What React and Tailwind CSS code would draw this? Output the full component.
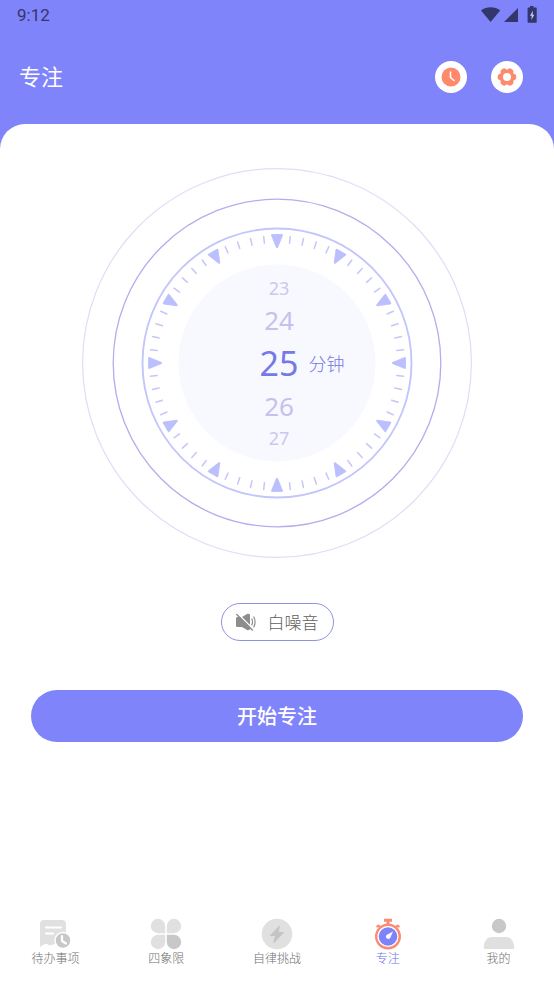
import { useState } from "react";

const tabs = [
    { id: "todo", label: "待办事项", Icon: TodoIcon },
    { id: "quadrant", label: "四象限", Icon: QuadrantIcon },
    { id: "challenge", label: "自律挑战", Icon: ChallengeIcon },
    { id: "focus", label: "专注", Icon: StopwatchIcon },
    { id: "mine", label: "我的", Icon: PersonIcon },
];

// rows of the minute wheel, from top to bottom
const wheelRows = [
    { offset: -2, className: "h-[26px] text-[18px] text-[#ccc7ee]" },
    { offset: -1, className: "h-[38px] text-[26px] text-[#c6c1ec]" },
    { offset: 0, className: "h-[48px] text-[34px] text-[#7479e8]" },
    { offset: 1, className: "h-[38px] text-[26px] text-[#c6c1ec]" },
    { offset: 2, className: "h-[26px] text-[18px] text-[#ccc7ee]" },
];

function TodoIcon() {
    return (
        <svg viewBox="0 0 32 32" className="size-8" aria-hidden="true">
            <path d="M5 2h18a4 4 0 0 1 4 4v20c-2 2-5 1.500-7 .5-2-1-4-1-6 0-2 1-4 1-6-.5-2 0-4 .5-6 2.500q-1 .8-1-.5V6a4 4 0 0 1 4-4Z" fill="#e0e0e0" />
            <path d="M7 9.500h15M7 15.500h7" stroke="#fff" strokeWidth="2.200" strokeLinecap="round" />
            <circle cx="24" cy="22.500" r="8" fill="#c8c8c8" stroke="#fff" strokeWidth="1.500" />
            <path d="M23 18v5l4 2.500" fill="none" stroke="#fff" strokeWidth="2.200" strokeLinecap="round" strokeLinejoin="round" />
        </svg>
    );
}

function QuadrantIcon() {
    return (
        <svg viewBox="0 0 32 32" className="size-8" aria-hidden="true">
            <path d="M8 .8a7.200 7.200 0 0 1 7.200 7.200v7.200H8A7.200 7.200 0 0 1 8 .8Z" fill="#e0e0e0" />
            <path d="M24 .8a7.200 7.200 0 0 1 0 14.400h-7.200V8A7.200 7.200 0 0 1 24 .8Z" fill="#e0e0e0" />
            <path d="M8 16.800h7.200V24A7.200 7.200 0 1 1 8 16.800Z" fill="#e0e0e0" />
            <path d="M16.800 16.800H24a7.200 7.200 0 1 1-7.200 7.200Z" fill="#c8c8c8" />
        </svg>
    );
}

function ChallengeIcon() {
    return (
        <svg viewBox="0 0 32 32" className="size-8" aria-hidden="true">
            <circle cx="16" cy="16" r="15.300" fill="#e0e0e0" />
            <path d="M18.500 8 9.500 17.500h5L13 24.500l9.500-10h-5.500Z" fill="#c4c4c4" stroke="#c4c4c4" strokeLinejoin="round" />
        </svg>
    );
}

function StopwatchIcon() {
    return (
        <svg viewBox="0 0 32 32" className="size-8" aria-hidden="true">
            <path d="M12 2.200h8M16 2v5" stroke="#fb8c72" strokeWidth="3" />
            <path d="m4.500 9 2-1.500 2.500 3M27.500 9l-2-1.500-2.500 3" fill="none" stroke="#fb8c72" strokeWidth="2" strokeLinejoin="round" />
            <circle cx="16" cy="18.500" r="11.800" fill="#fff" stroke="#fb8c72" strokeWidth="2.400" />
            <circle cx="16" cy="18.500" r="9.300" fill="#7f83fa" />
            <path d="m21 13.500-2.700 6.200a2.300 2.300 0 1 1-3.300-3Z" fill="#fff" />
        </svg>
    );
}

function PersonIcon() {
    return (
        <svg viewBox="0 0 32 32" className="size-8" aria-hidden="true">
            <circle cx="16" cy="8" r="7.200" fill="#c8c8c8" />
            <path d="M9 19h14c5.500 0 8 5 8.300 10.500a1.500 1.500 0 0 1-1.500 1.500H2.200a1.500 1.500 0 0 1-1.500-1.500C1 24 3.500 19 9 19Z" fill="#e0e0e0" />
        </svg>
    );
}

function ClockIcon() {
    return (
        <svg viewBox="0 0 20 20" className="size-5" aria-hidden="true">
            <circle cx="10" cy="10" r="9.500" fill="#fd8a6c" />
            <path d="M9.500 5v5.500l3.500 3" fill="none" stroke="#fff" strokeWidth="1.500" strokeLinecap="round" strokeLinejoin="round" />
        </svg>
    );
}

function GearIcon() {
    return (
        <svg viewBox="0 0 20 20" className="size-5" aria-hidden="true">
            {[0, 60, 120, 180, 240, 300].map((angle) => (
                <circle key={angle} cx="16" cy="10" r="3.300" fill="#fd8a6c" transform={`rotate(${angle} 10 10)`} />
            ))}
            <circle cx="10" cy="10" r="7.600" fill="#fd8a6c" />
            <circle cx="10" cy="10" r="4" fill="#fff" />
        </svg>
    );
}

function MutedIcon() {
    return (
        <svg viewBox="0 0 20 18" className="h-[18px] w-5" aria-hidden="true">
            <path d="M1.500 4H6l5-3c.8-.5 3-.2 3 1.200v13.600c0 1.400-2.200 1.700-3 1.200L6 14H1.500C.7 14 0 13.500 0 12.500v-7C0 4.500.7 4 1.500 4Z" fill="#8d8d8d" />
            <path d="M15.800 6c1 2 1 4 0 6M17.800 4c1.700 3.300 1.700 6.700 0 10" fill="none" stroke="#8d8d8d" strokeWidth="1.200" strokeLinecap="round" />
            <path d="m1.500 .5 16 16" stroke="#fff" strokeWidth="1.600" />
            <path d="m.8 1.500 15.500 15.500" stroke="#8d8d8d" strokeWidth="1.500" strokeLinecap="round" />
        </svg>
    );
}

function StatusBar() {
    return (
        <div className="flex h-[30px] items-center justify-between px-[17px] text-[#33366c]">
            <span className="font-[Roboto,sans-serif] text-[17px] leading-5">9:12</span>
            <svg viewBox="0 0 56 18" className="h-[18px] w-14" fill="currentColor" aria-hidden="true">
                <path d="M0 4.500C5.500.2 14 .2 19.200 4.500L9.600 16Z" />
                <path d="M37 2v14H23Z" />
                <path d="M49 0h3.500v1.500H55q.7 0 .7.8V16q0 .8-.7.8h-7.600q-.8 0-.8-.8V2.300q0-.8.800-.8H49Z" />
                <path d="m52 4.500-3 5.200h1.800L50.300 14l3-5.300h-1.800Z" fill="#c9cbff" />
            </svg>
        </div>
    );
}

function DialFace() {
    const marks = Array.from({ length: 60 }, (_, i) => i);

    return (
        <svg viewBox="-195 -195 390 390" className="col-start-1 row-start-1 w-full" fill="none" aria-hidden="true">
            <circle r="194.400" stroke="#dedef7" strokeWidth="1.200" />
            <circle r="163.800" stroke="#b1aeed" strokeWidth="1.300" />
            <circle r="134.500" stroke="#c3c6fa" strokeWidth="1.900" />
            <circle r="98.500" fill="#f8f8ff" />
            {marks.map((i) =>
                i % 5 === 0 ? (
                    <path key={i} d="M-5-128.500H5q.8 0 .5.800L.6-115.500q-.6 1-1.200 0L-5.500-127.700q-.3-.8.500-.8Z" fill="#bbbffd" stroke="#bbbffd" strokeWidth=".8" transform={`rotate(${i * 6})`} />
                ) : (
                    <path key={i} d="M0-127.300V-120.500" stroke="#c6c7f8" strokeWidth="1.500" strokeLinecap="round" transform={`rotate(${i * 6})`} />
                )
            )}
        </svg>
    );
}

function MinuteWheel({ minutes, onChange }) {
    return (
        <div className="col-start-1 row-start-1 flex flex-col items-stretch pl-1">
            {wheelRows.map(({ offset, className }) => (
                <div key={offset} className="grid grid-cols-[1fr_auto_1fr] items-center">
                    <button
                        type="button"
                        onClick={() => onChange(Math.max(3, minutes + offset))}
                        className={`col-start-2 flex items-center justify-center font-['Noto_Sans',sans-serif] leading-none ${className}`}
                    >
                        {minutes + offset}
                    </button>
                    {offset === 0 && <span className="pl-[10px] text-[18px] leading-6 font-light text-[#7479e0]">分钟</span>}
                </div>
            ))}
        </div>
    );
}

const App = () => {
    const [minutes, setMinutes] = useState(25);
    const [activeTab, setActiveTab] = useState("focus");

    return (
        <div className="flex min-h-screen flex-col bg-[#7f84fa] font-['Noto_Sans_CJK_SC',sans-serif]">
            <StatusBar />

            <header className="flex h-[94px] items-center justify-between pr-[31px] pl-[19px]">
                <h1 className="pb-1 text-[22px] leading-8 text-white">专注</h1>
                <div className="flex gap-6">
                    <button type="button" aria-label="专注记录" className="flex size-8 items-center justify-center rounded-full bg-white">
                        <ClockIcon />
                    </button>
                    <button type="button" aria-label="设置" className="flex size-8 items-center justify-center rounded-full bg-white">
                        <GearIcon />
                    </button>
                </div>
            </header>

            <div className="flex flex-1 flex-col rounded-t-[25px] bg-white pt-11">
                <main className="flex flex-col items-center px-[31px]">
                    <div className="grid w-full max-w-[390px] items-center">
                        <DialFace />
                        <MinuteWheel minutes={minutes} onChange={setMinutes} />
                    </div>

                    <button
                        type="button"
                        className="mt-[45px] flex h-[38px] items-center gap-3 rounded-full border border-[#9092e2] px-[14px] text-[17px] leading-6 font-light text-[#606060]"
                    >
                        <MutedIcon />
                        白噪音
                    </button>

                    <button
                        type="button"
                        className="mt-[49px] h-[52px] w-full rounded-full bg-[#7f84fa] text-[20px] leading-7 font-medium text-white"
                    >
                        开始专注
                    </button>
                </main>

                {/* Bottom tabs */}
                <nav className="mt-auto flex pt-8 pb-[18px]">
                    {tabs.map(({ id, label, Icon }) => (
                        <button
                            key={id}
                            type="button"
                            aria-current={activeTab === id ? "page" : undefined}
                            onClick={() => setActiveTab(id)}
                            className={`flex flex-1 flex-col items-center text-[12px] leading-4 font-light ${activeTab === id ? "text-[#6a6ff0]" : "text-[#707070]"
                                }`}
                        >
                            <Icon />
                            <span>{label}</span>
                        </button>
                    ))}
                </nav>
            </div>
        </div>
    );
};

export default App;
